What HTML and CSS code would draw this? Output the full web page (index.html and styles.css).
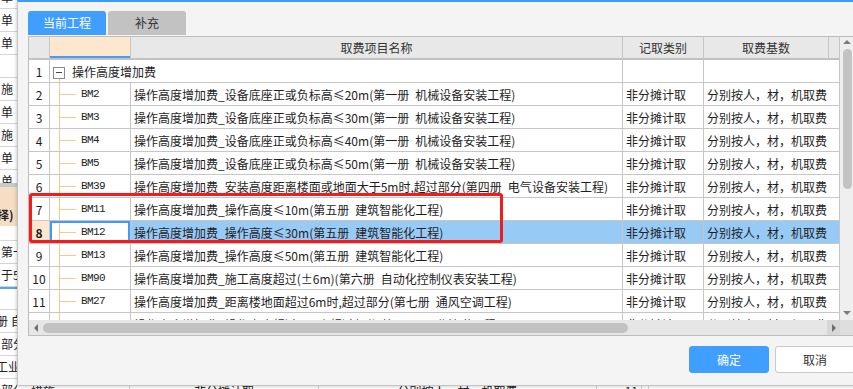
FILE: index.html
```html
<!DOCTYPE html>
<html lang="zh-CN">
<head>
    <meta charset="UTF-8">
    <meta name="viewport" content="width=device-width, initial-scale=1.0">
    <title>取费项目</title>
    <link rel="stylesheet" href="styles.css">
</head>
<body>
    <!-- background sheet, mostly covered by the dialog -->
    <div class="app">
        <div class="side">
            <div class="side-cell cut">单</div>
            <div class="side-cell">单</div>
            <div class="side-cell">单</div>
            <div class="side-cell"></div>
            <div class="side-cell">施</div>
            <div class="side-cell">单</div>
            <div class="side-cell">施</div>
            <div class="side-cell">单</div>
            <div class="side-cell short">单</div>
            <div class="side-band"></div>
            <div class="side-head">择)</div>
            <div class="side-cell gap"></div>
            <div class="side-cell">第一</div>
            <div class="side-cell">于5</div>
            <div class="side-cell focus"></div>
            <div class="side-cell shift">册 自</div>
            <div class="side-cell">部分</div>
            <div class="side-cell shift">工业</div>
            <div class="side-cell">部分</div>
        </div>
        <div class="app-main">
            <div class="under-row">
                <div class="under-cell w1">措施</div>
                <div class="under-cell w2 center">非分摊计取</div>
                <div class="under-cell w3 center">分别按人，材，机取费</div>
                <div class="under-cell w4 right">11</div>
                <div class="under-cell"></div>
            </div>
        </div>
    </div>

    <div class="dialog">
        <div class="tabs">
            <div class="tab active">当前工程</div>
            <div class="tab">补充</div>
        </div>

        <div class="grid-area">
            <div class="grid-view">
                <table class="grid">
                    <colgroup>
                        <col class="c-num">
                        <col class="c-tree">
                        <col class="c-name">
                        <col class="c-type">
                        <col class="c-base">
                        <col class="c-pad">
                    </colgroup>
                    <thead>
                        <tr>
                            <th></th>
                            <th class="cur"></th>
                            <th>取费项目名称</th>
                            <th>记取类别</th>
                            <th>取费基数</th>
                            <th></th>
                        </tr>
                    </thead>
                    <tbody>
                        <tr>
                            <td class="num">1</td>
                            <td class="root" colspan="2"><span class="fold"></span>操作高度增加费</td>
                            <td></td>
                            <td colspan="2"></td>
                        </tr>
                        <tr>
                            <td class="num">2</td>
                            <td class="tree">BM2</td>
                            <td>操作高度增加费_设备底座正或负标高≤20m(第一册&ensp;机械设备安装工程)</td>
                            <td>非分摊计取</td>
                            <td colspan="2">分别按人，材，机取费</td>
                        </tr>
                        <tr>
                            <td class="num">3</td>
                            <td class="tree">BM3</td>
                            <td>操作高度增加费_设备底座正或负标高≤30m(第一册&ensp;机械设备安装工程)</td>
                            <td>非分摊计取</td>
                            <td colspan="2">分别按人，材，机取费</td>
                        </tr>
                        <tr>
                            <td class="num">4</td>
                            <td class="tree">BM4</td>
                            <td>操作高度增加费_设备底座正或负标高≤40m(第一册&ensp;机械设备安装工程)</td>
                            <td>非分摊计取</td>
                            <td colspan="2">分别按人，材，机取费</td>
                        </tr>
                        <tr>
                            <td class="num">5</td>
                            <td class="tree">BM5</td>
                            <td>操作高度增加费_设备底座正或负标高≤50m(第一册&ensp;机械设备安装工程)</td>
                            <td>非分摊计取</td>
                            <td colspan="2">分别按人，材，机取费</td>
                        </tr>
                        <tr>
                            <td class="num">6</td>
                            <td class="tree">BM39</td>
                            <td>操作高度增加费_安装高度距离楼面或地面大于5m时,超过部分(第四册&ensp;电气设备安装工程)</td>
                            <td>非分摊计取</td>
                            <td colspan="2">分别按人，材，机取费</td>
                        </tr>
                        <tr>
                            <td class="num">7</td>
                            <td class="tree">BM11</td>
                            <td>操作高度增加费_操作高度≤10m(第五册&ensp;建筑智能化工程)</td>
                            <td>非分摊计取</td>
                            <td colspan="2">分别按人，材，机取费</td>
                        </tr>
                        <tr class="sel">
                            <td class="num">8</td>
                            <td class="tree">BM12</td>
                            <td>操作高度增加费_操作高度≤30m(第五册&ensp;建筑智能化工程)</td>
                            <td>非分摊计取</td>
                            <td colspan="2">分别按人，材，机取费</td>
                        </tr>
                        <tr>
                            <td class="num">9</td>
                            <td class="tree">BM13</td>
                            <td>操作高度增加费_操作高度≤50m(第五册&ensp;建筑智能化工程)</td>
                            <td>非分摊计取</td>
                            <td colspan="2">分别按人，材，机取费</td>
                        </tr>
                        <tr>
                            <td class="num">10</td>
                            <td class="tree">BM90</td>
                            <td>操作高度增加费_施工高度超过(±6m)(第六册&ensp;自动化控制仪表安装工程)</td>
                            <td>非分摊计取</td>
                            <td colspan="2">分别按人，材，机取费</td>
                        </tr>
                        <tr>
                            <td class="num">11</td>
                            <td class="tree">BM27</td>
                            <td>操作高度增加费_距离楼地面超过6m时,超过部分(第七册&ensp;通风空调工程)</td>
                            <td>非分摊计取</td>
                            <td colspan="2">分别按人，材，机取费</td>
                        </tr>
                        <tr>
                            <td class="num">12</td>
                            <td class="tree">BM28</td>
                            <td>操作高度增加费_操作高度超过5m时,超过部分(第八册&ensp;工业管道工程)</td>
                            <td>非分摊计取</td>
                            <td colspan="2">分别按人，材，机取费</td>
                        </tr>
                    </tbody>
                </table>
                <div class="mark"></div>
            </div>

            <div class="vscroll">
                <span class="arrow up"></span>
                <span class="vthumb"></span>
                <span class="vtrack"></span>
                <span class="arrow down"></span>
            </div>

            <div class="hscroll">
                <span class="hbtn"><span class="arrow left"></span></span>
                <span class="hthumb"></span>
                <span class="htrack"></span>
                <span class="hbtn dark"><span class="arrow right"></span></span>
            </div>
            <div class="corner"></div>
        </div>

        <div class="footer">
            <button class="btn primary">确定</button>
            <button class="btn">取消</button>
        </div>
    </div>
</body>
</html>
```

FILE: styles.css
```css
* {
    box-sizing: border-box;
}
body {
    margin: 0;
    width: 853px;
    height: 389px;
    overflow: hidden;
    position: relative;
    font-family: "Noto Sans CJK SC", "Liberation Sans", sans-serif;
    font-size: 12px;
    color: #222;
    background: #fff;
}

/* background sheet */
.app {
    display: flex;
    height: 389px;
    overflow: hidden;
}
.side {
    width: 17px;
    flex: none;
    display: flex;
    flex-direction: column;
    overflow: hidden;
    background: #fff;
}
.side-cell {
    height: 23px;
    flex: none;
    line-height: 22px;
    padding-left: 1px;
    border-bottom: 1px solid #d6d6d6;
    white-space: nowrap;
    overflow: hidden;
}
.side-cell.cut {
    margin-top: -14px;
}
.side-cell.short {
    height: 13px;
    border-bottom: none;
}
.side-cell.gap {
    height: 15px;
}
.side-cell.focus {
    border-top: 2px solid #5aa3ee;
}
.side-cell.shift {
    text-indent: -5px;
}
.side-band {
    height: 4px;
    flex: none;
    background: #c9c9c9;
}
.side-head {
    height: 39px;
    flex: none;
    padding-top: 20px;
    line-height: 16px;
    text-indent: -3px;
    font-weight: bold;
    white-space: nowrap;
    background: #f7dec3;
}
.app-main {
    flex: 1;
    display: flex;
    flex-direction: column;
    justify-content: flex-end;
}
.under-row {
    display: flex;
    height: 23px;
    margin-bottom: -13px;
    line-height: 22px;
    border-top: 1px solid #d6d6d6;
}
.under-cell {
    flex: none;
    padding: 0 3px;
    border-right: 1px solid #d6d6d6;
    white-space: nowrap;
}
.under-cell.w1 { width: 113px; padding-left: 14px; }
.under-cell.w2 { width: 189px; }
.under-cell.w3 { width: 278px; }
.under-cell.w4 { width: 45px; }
.center { text-align: center; }
.right { text-align: right; }

/* dialog */
.dialog {
    position: absolute;
    left: 17px;
    top: 0;
    width: 845px;
    height: 386px;
    padding-left: 10px;
    background: #f4f4f4;
    border-top: 2px solid #3d9bff;
    border-left: 1px solid #c4c4c4;
    border-bottom: 1px solid #c4c4c4;
    box-shadow: 0 0 4px rgba(0, 0, 0, 0.25);
}
.tabs {
    display: flex;
    gap: 2px;
    margin-top: 9px;
    height: 25px;
}
.tab {
    width: 78px;
    height: 24px;
    line-height: 24px;
    text-align: center;
    color: #333;
    background: #c2c2c2;
    border-radius: 3px 3px 0 0;
}
.tab.active {
    color: #fff;
    background: #409eff;
}

.grid-area {
    width: 828px;
    display: grid;
    grid-template-columns: 811px 16px;
    grid-template-rows: 283px 15px;
    border: 1px solid #bdbdbd;
    border-right: none;
    background: #fff;
}
.grid-view {
    position: relative;
    overflow: hidden;
}
.grid {
    width: 811px;
    table-layout: fixed;
    border-collapse: separate;
    border-spacing: 0;
}
.c-num { width: 21px; }
.c-tree { width: 81px; }
.c-name { width: 492px; }
.c-type { width: 81px; }
.c-base { width: 125px; }
.c-pad { width: 11px; }

.grid th,
.grid td {
    height: 23px;
    padding: 0 3px;
    border-right: 1px solid #c6c6c6;
    border-bottom: 1px solid #c6c6c6;
    white-space: nowrap;
    overflow: hidden;
    text-align: left;
    font-weight: normal;
    color: #1e1e1e;
}
.grid th {
    text-align: center;
    color: #333;
    background: #e8e8e8;
    border-bottom: 2px solid #c2c2c2;
}
.grid th.cur {
    background: #fde7cf;
    box-shadow: inset 0 -2px 0 #409eff;
}
.grid td.num {
    padding: 0;
    text-align: center;
}
.grid td.root {
    padding-left: 3px;
    background: linear-gradient(#fcc688, #fcc688) 9px 18px / 1px 5px no-repeat;
}
.fold {
    display: inline-block;
    width: 12px;
    height: 12px;
    margin-right: 7px;
    vertical-align: -2px;
    border: 1px solid #8a8a8a;
    background: linear-gradient(#444, #444) center / 6px 1px no-repeat #fff;
}
.grid td.tree {
    padding-left: 31px;
    font-family: "Liberation Mono", monospace;
    font-size: 11px;
    letter-spacing: -0.6px;
    color: #222;
    background:
        linear-gradient(#fcc688, #fcc688) 9px 0 / 1px 100% no-repeat,
        linear-gradient(#fcc688, #fcc688) 9px 11px / 17px 1px no-repeat;
}
.sel td {
    background: #98caf6;
}
.sel td.num {
    font-weight: bold;
    background: #fde7cf;
}
.sel td.tree {
    background:
        linear-gradient(#fcc688, #fcc688) 9px 0 / 1px 100% no-repeat,
        linear-gradient(#fcc688, #fcc688) 9px 11px / 17px 1px no-repeat,
        #fff;
    box-shadow: inset 0 0 0 2px #3d9bff;
}

/* annotation box */
.mark {
    position: absolute;
    left: 0;
    top: 156px;
    width: 474px;
    height: 50px;
    border: 3px solid #f31b1b;
    border-radius: 3px;
}

/* scroll bars */
.vscroll {
    display: flex;
    flex-direction: column;
    align-items: center;
    background: #efefef;
}
.vthumb {
    width: 9px;
    height: 140px;
    margin-right: 2px;
    border-radius: 5px;
    background: #c3c3c3;
}
.vtrack {
    flex: 1;
}
.arrow {
    width: 0;
    height: 0;
    border: 4px solid transparent;
}
.arrow.up {
    margin: 3px 2px 5px 0;
    border-top: none;
    border-bottom-color: #7a7a7a;
}
.arrow.down {
    margin: 0 2px 5px 0;
    border-bottom: none;
    border-top-color: #7a7a7a;
}
.hscroll {
    display: flex;
    align-items: center;
    background: #e6e6e6;
}
.hbtn {
    width: 14px;
    height: 15px;
    display: flex;
    align-items: center;
    justify-content: center;
}
.hbtn.dark {
    width: 13px;
    background: #d7d7d7;
}
.arrow.left {
    border-left: none;
    border-right-color: #6e6e6e;
}
.arrow.right {
    border-right: none;
    border-left-color: #6e6e6e;
}
.hthumb {
    width: 585px;
    height: 10px;
    border-radius: 5px;
    background: #c2c2c2;
}
.htrack {
    flex: 1;
}
.corner {
    background: #dedede;
}

/* buttons */
.footer {
    display: flex;
    justify-content: flex-end;
    gap: 6px;
    margin-top: 10px;
    padding-right: 7px;
}
.btn {
    width: 80px;
    height: 27px;
    font-family: inherit;
    font-size: 12px;
    color: #333;
    background: #fff;
    border: 1px solid #c9c9c9;
    border-radius: 3px;
}
.btn.primary {
    color: #fff;
    background: #409eff;
    border-color: #409eff;
}
```
